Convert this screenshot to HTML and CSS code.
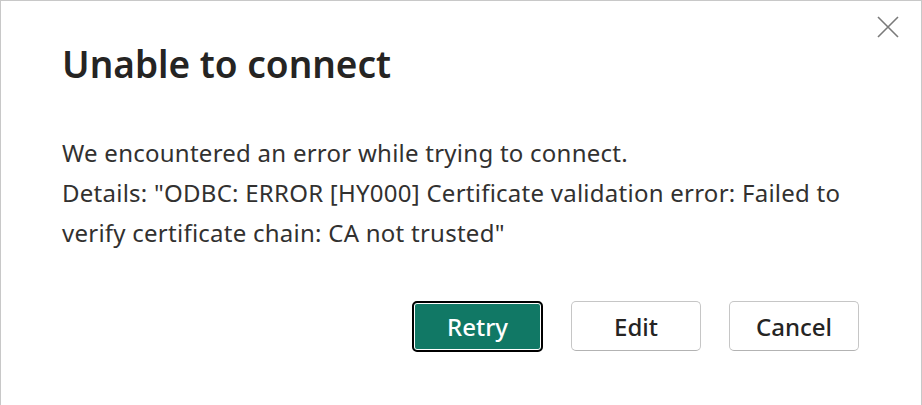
FILE: index.html
```html
<!DOCTYPE html>
<html lang="en">
<head>
<meta charset="utf-8">
<title>Unable to connect</title>
<link rel="stylesheet" href="styles.css">
</head>
<body>
<div class="dialog">
  <button class="close" aria-label="Close">
    <svg width="22" height="22" viewBox="0 0 22 22"><path d="M1 1 L21 21 M21 1 L1 21" stroke="#7a7a7a" stroke-width="1.6" fill="none"/></svg>
  </button>
  <h1 class="title">Unable to connect</h1>
  <div class="message">
    <p>We encountered an error while trying to connect.</p>
    <p>Details: "ODBC: ERROR [HY000] Certificate validation error: Failed to verify certificate chain: CA not trusted"</p>
  </div>
  <div class="actions">
    <button class="btn primary">Retry</button>
    <button class="btn">Edit</button>
    <button class="btn">Cancel</button>
  </div>
</div>
</body>
</html>
```
FILE: styles.css
```css
html, body {
  margin: 0;
  padding: 0;
  background: #ffffff;
}
.dialog {
  position: relative;
  box-sizing: border-box;
  width: 922px;
  height: 405px;
  border: 1px solid #c8c8c8;
  border-bottom: none;
  padding: 39px 62px 0 61px;
  font-family: "Noto Sans", "Open Sans", sans-serif;
  color: #252423;
}
.close {
  position: absolute;
  top: 15px;
  right: 22px;
  width: 22px;
  height: 22px;
  padding: 0;
  border: none;
  background: transparent;
  display: flex;
}
.title {
  margin: 0;
  font-size: 37px;
  font-weight: 600;
  line-height: 48px;
}
.message {
  margin-top: 45px;
  font-size: 24px;
  letter-spacing: 0.25px;
  line-height: 40px;
  color: #323130;
  max-width: 790px;
}
.message p {
  margin: 0;
}
.actions {
  display: flex;
  justify-content: flex-end;
  gap: 28px;
  margin-top: 48px;
}
.btn {
  box-sizing: border-box;
  width: 130px;
  height: 50px;
  border: 1px solid #c6c6c6;
  border-bottom-color: #b3b3b3;
  border-radius: 5px;
  background: #ffffff;
  font-family: "Noto Sans", "Open Sans", sans-serif;
  font-size: 24px;
  font-weight: 500;
  color: #252423;
  padding: 0;
}
.btn.primary {
  width: 131px;
  height: 51px;
  background: #117865;
  color: #ffffff;
  border: 2px solid #000000;
  box-shadow: inset 0 0 0 1px #ffffff;
}
```
